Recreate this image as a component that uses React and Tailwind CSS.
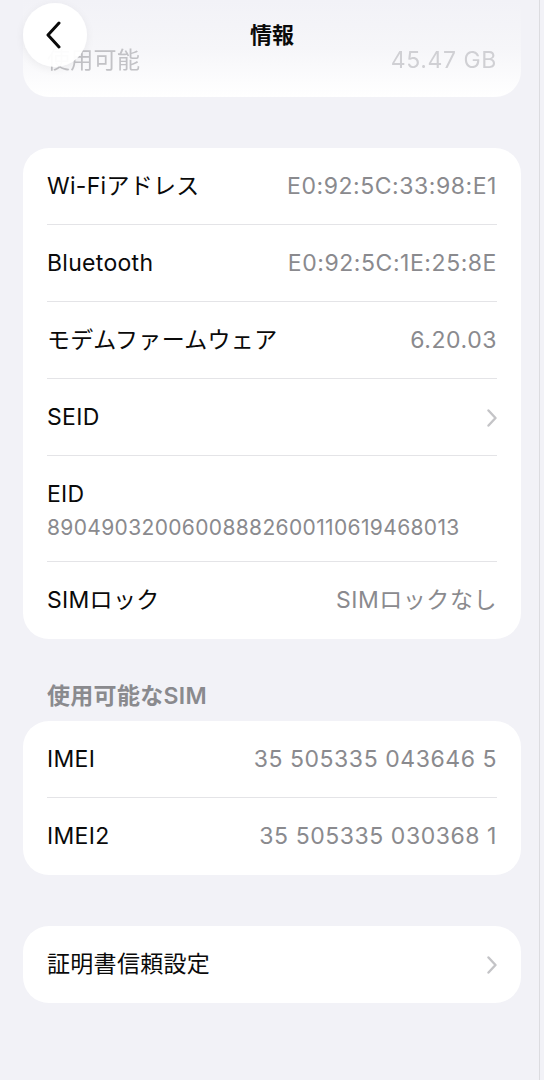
import React from "react";

const font = { fontFamily: 'Inter, "Noto Sans CJK JP", sans-serif' };

function Chevron() {
  return (
    <svg width="10" height="18" viewBox="0 0 10 18" fill="none">
      <path d="M1.5 1.5 L8.5 9 L1.5 16.5" stroke="#c4c4c7" strokeWidth="2.4" strokeLinecap="round" strokeLinejoin="round" />
    </svg>
  );
}

function Divider() {
  return <div className="h-px -mt-px bg-[#e4e4e7] mx-[24px]" />;
}

function Row({ label, value, chevron }) {
  return (
    <div className="h-[77px] px-[24px] flex items-center justify-between">
      <span className="text-[23px] text-[#0a0a0a] tracking-[0.3px]">{label}</span>
      {value && <span className="text-[23px] text-[#8a8a8e] tracking-[0.55px]">{value}</span>}
      {chevron && <Chevron />}
    </div>
  );
}

export default function App() {
  return (
    <div className="relative w-[544px] min-h-[1080px] bg-[#f2f2f7] overflow-hidden" style={font}>
      {/* faded top card */}
      <div className="mx-[23px] h-[97px] rounded-b-[26px] bg-gradient-to-b from-[#f2f2f7] via-[#f6f6f9] to-white flex flex-col justify-end">
        <div className="h-[76px] px-[24px] pt-[2px] flex items-center justify-between blur-[0.7px]">
          <span className="text-[23px] text-[#c2c2c6] tracking-[0.3px]">使用可能</span>
          <span className="text-[23px] text-[#d0d0d4] tracking-[0.6px]">45.47 GB</span>
        </div>
      </div>

      {/* card 1 */}
      <div className="mt-[51px] mx-[23px] rounded-[26px] bg-white">
        <Row label="Wi-Fiアドレス" value="E0:92:5C:33:98:E1" />
        <Divider />
        <Row label="Bluetooth" value="E0:92:5C:1E:25:8E" />
        <Divider />
        <Row label="モデムファームウェア" value="6.20.03" />
        <Divider />
        <Row label="SEID" chevron />
        <Divider />
        <div className="h-[106px] px-[24px] pt-[2px] flex flex-col justify-center">
          <span className="text-[23px] leading-[32px] text-[#0a0a0a] tracking-[0.3px]">EID</span>
          <span className="mt-[3px] text-[21px] leading-[30px] text-[#8a8a8e] tracking-[0.35px]">89049032006008882600110619468013</span>
        </div>
        <Divider />
        <Row label="SIMロック" value="SIMロックなし" />
      </div>

      {/* section header */}
      <div className="mt-[43px] px-[47px] h-[28px] flex items-center">
        <span className="text-[23px] font-semibold text-[#8a8a8e] tracking-[0.3px]">使用可能なSIM</span>
      </div>

      {/* card 2 */}
      <div className="mt-[11px] mx-[23px] rounded-[26px] bg-white">
        <Row label="IMEI" value="35 505335 043646 5" />
        <Divider />
        <Row label="IMEI2" value="35 505335 030368 1" />
      </div>

      {/* card 3 */}
      <div className="mt-[51px] mx-[23px] rounded-[26px] bg-white">
        <Row label="証明書信頼設定" chevron />
      </div>

      {/* nav overlay */}
      <div className="absolute left-[23px] top-[3px] w-[64px] h-[64px] rounded-full bg-white/95 shadow-[0_2px_10px_rgba(0,0,0,0.06)] flex items-center justify-center">
        <svg width="20" height="28" viewBox="0 0 20 28" fill="none" className="-ml-[3px]">
          <path d="M15 2 L4 14 L15 26" stroke="#0a0a0a" strokeWidth="3" strokeLinecap="round" strokeLinejoin="round" />
        </svg>
      </div>
      <div className="absolute top-[21px] left-0 right-0 flex justify-center">
        <span className="text-[22px] font-bold text-[#0a0a0a] leading-[28px]">情報</span>
      </div>

      <div className="absolute top-0 bottom-0 right-[4px] w-px bg-[#dcdce0]" />
    </div>
  );
}
